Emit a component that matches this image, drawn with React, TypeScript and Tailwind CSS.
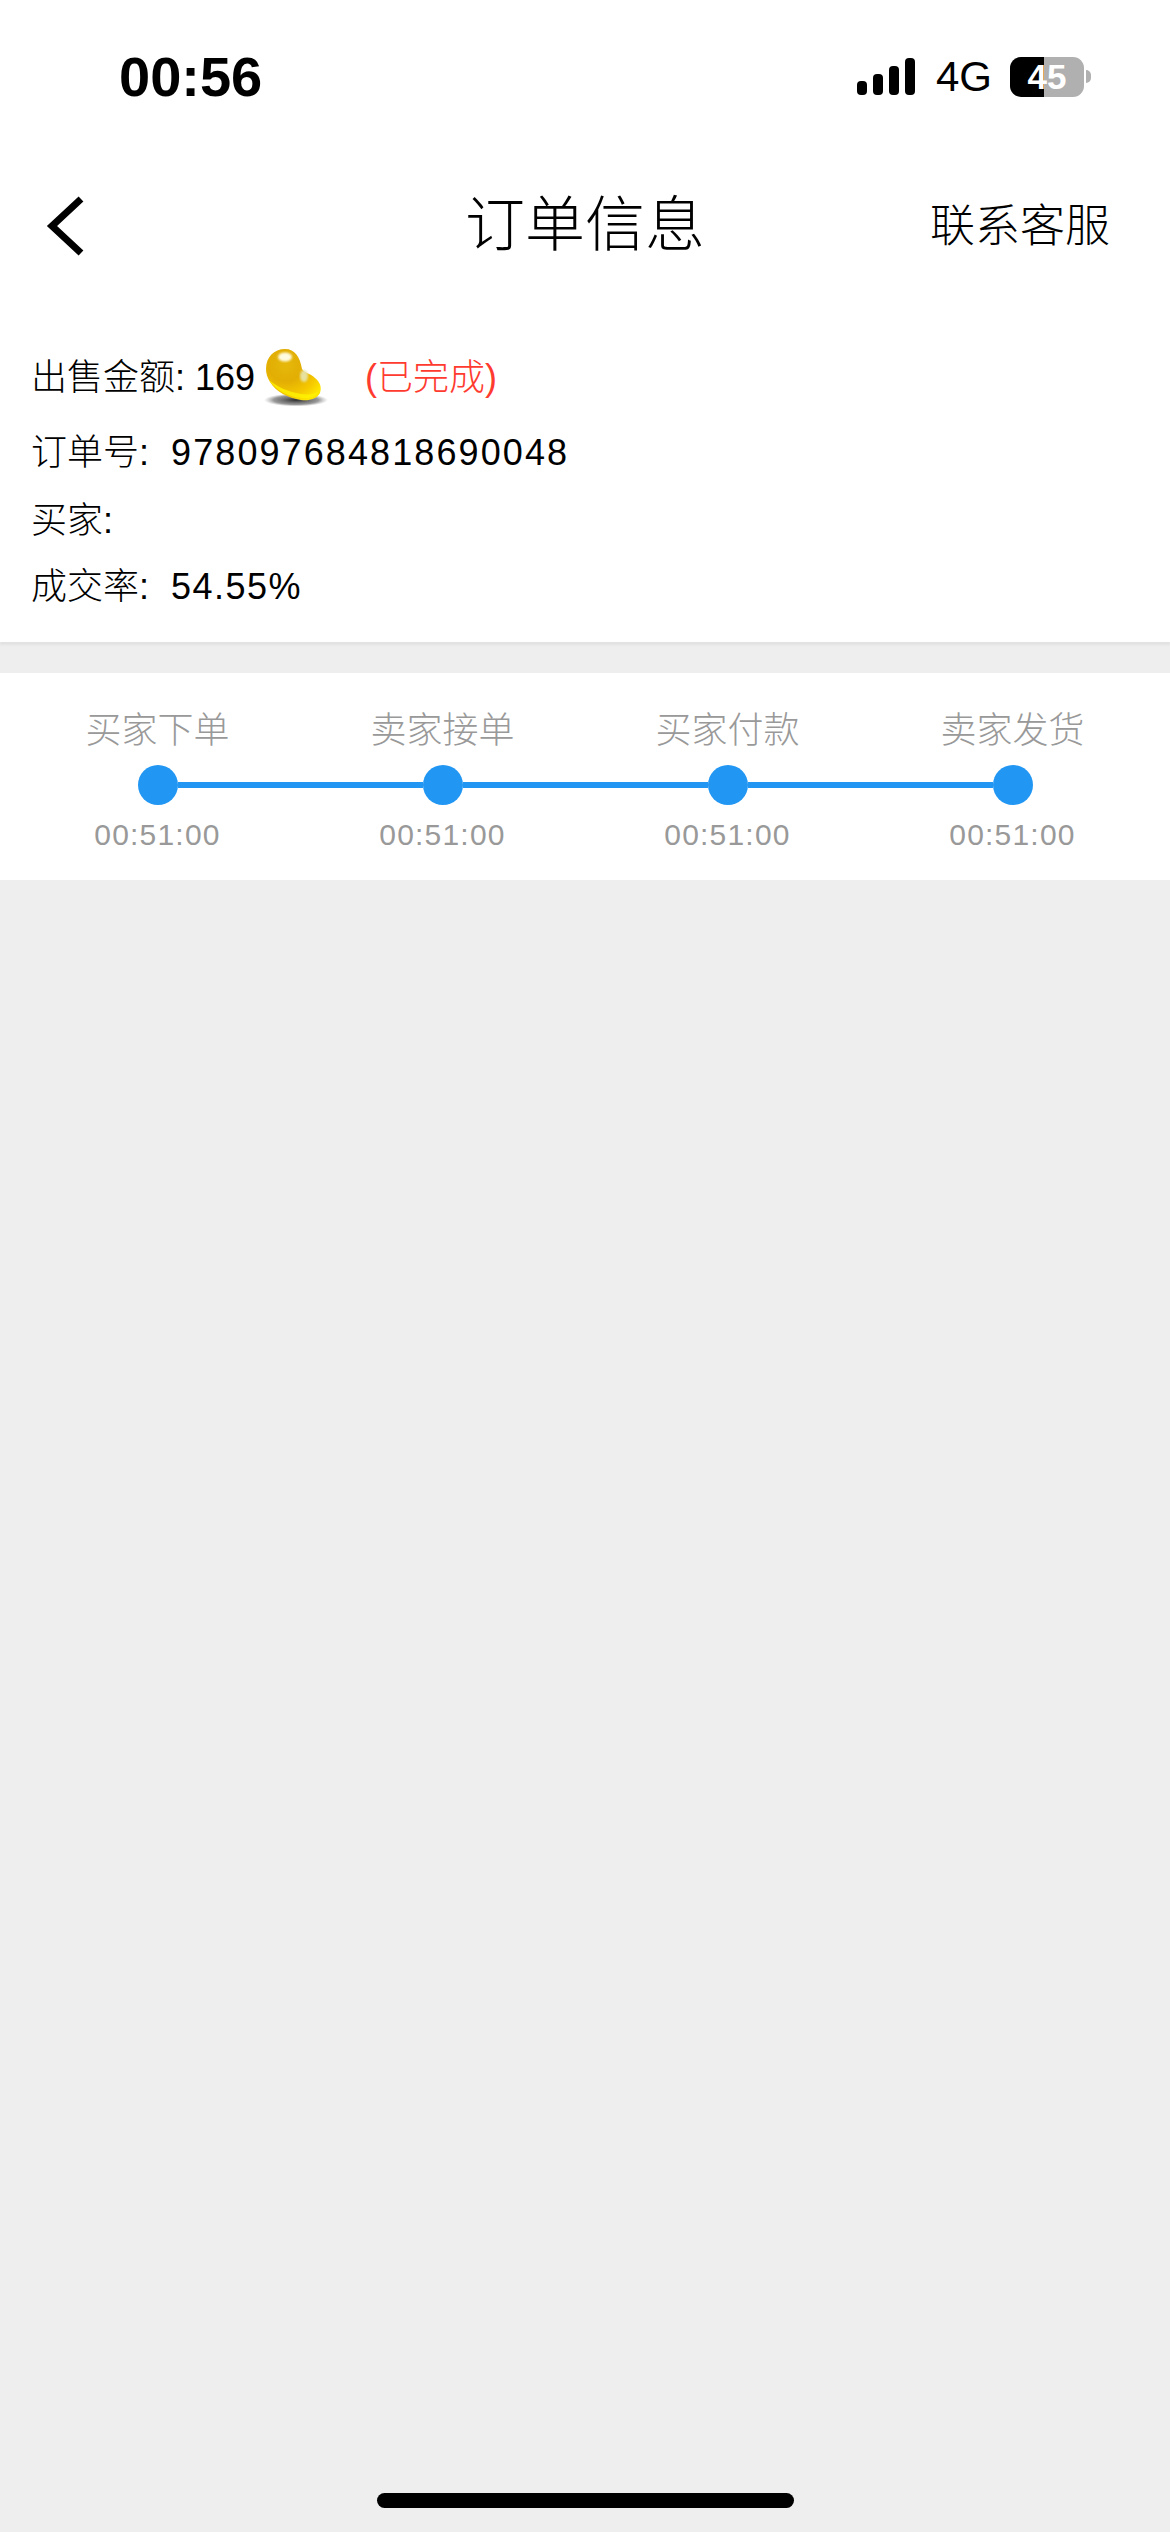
const FONT = "font-['Liberation_Sans','Noto_Sans_CJK_SC',sans-serif]";

const STEPS = [
  { label: "买家下单", time: "00:51:00" },
  { label: "卖家接单", time: "00:51:00" },
  { label: "买家付款", time: "00:51:00" },
  { label: "卖家发货", time: "00:51:00" },
];

function SignalBars() {
  return (
    <svg width="58" height="37" viewBox="0 0 58 37" fill="#000">
      <rect x="0" y="23" width="10" height="14" rx="4" />
      <rect x="16" y="16" width="10" height="21" rx="4" />
      <rect x="32" y="8" width="10" height="29" rx="4" />
      <rect x="48" y="0" width="10" height="37" rx="4" />
    </svg>
  );
}

function Battery() {
  return (
    <div className="flex items-center">
      <div className="relative flex h-[40px] w-[74px] overflow-hidden rounded-[11px]">
        <div className="w-[34px] bg-black" />
        <div className="flex-1 bg-[#b0b0b0]" />
        <span className="absolute inset-0 flex items-center justify-center text-[35px] font-bold leading-none text-white">
          45
        </span>
      </div>
      <div className="ml-[2px] h-[13px] w-[5px] rounded-r-full bg-[#b0b0b0]" />
    </div>
  );
}

function Bean() {
  return (
    <svg width="64" height="58" viewBox="0 0 64 58">
      <defs>
        <radialGradient id="beanFill" cx="0.36" cy="0.32" r="0.78">
          <stop offset="0" stopColor="#e6b80a" />
          <stop offset="0.4" stopColor="#e2ae04" />
          <stop offset="0.75" stopColor="#f5c800" />
          <stop offset="1" stopColor="#ffe600" />
        </radialGradient>
        <radialGradient id="beanShadow" cx="0.5" cy="0.5" r="0.5">
          <stop offset="0" stopColor="#222" stopOpacity="0.95" />
          <stop offset="0.7" stopColor="#555" stopOpacity="0.6" />
          <stop offset="1" stopColor="#888" stopOpacity="0" />
        </radialGradient>
        <filter id="beanBlur">
          <feGaussianBlur stdDeviation="1.2" />
        </filter>
      </defs>
      <ellipse cx="32" cy="51" rx="32" ry="6.5" fill="url(#beanShadow)" />
      <path
        d="M2 20C2 8 10 0 21 0C31 0 36 8 38 20C40 24 46 24 51 29C56 33 58 38 56 44C53 50 45 52 37 51C24 49 12 43 6 33C3 28 2 24 2 20Z"
        fill="url(#beanFill)"
      />
      <path
        d="M5 31C12 42 25 48 38 49C46 50 53 47 55 42C52 45 45 46 37 45C25 43 13 38 5 31Z"
        fill="#fff200"
        opacity="0.8"
      />
      <ellipse cx="21" cy="8" rx="7" ry="4.5" fill="#fffbe0" filter="url(#beanBlur)" />
      <ellipse cx="40" cy="27" rx="4" ry="6" fill="#e7e6b0" opacity="0.9" filter="url(#beanBlur)" />
    </svg>
  );
}

export default function App() {
  return (
    <div className={`flex min-h-[2532px] flex-col bg-[#eeeeee] ${FONT} text-black`}>
      <div className="bg-white">
        <div className="flex h-[156px] items-center justify-between pb-[3px] pl-[119px] pr-[79px]">
          <span className="text-[56px] font-bold leading-none">00:56</span>
          <div className="flex items-center">
            <SignalBars />
            <span className="ml-[21px] mr-[18px] text-[42px] leading-none">4G</span>
            <Battery />
          </div>
        </div>

        <div className="relative flex h-[142px] items-center justify-between pb-[2px] pl-[46px] pr-[60px]">
          <svg width="40" height="60" viewBox="0 0 40 60" fill="none">
            <path d="M35 3L6 30L35 57" stroke="#000" strokeWidth="7" />
          </svg>
          <span className="absolute inset-x-0 text-center text-[60px] font-light leading-none">订单信息</span>
          <span className="text-[45px] font-light leading-none">联系客服</span>
        </div>

        <div className="flex flex-col px-[31px] pb-[32px] pt-[49px] text-[36px] font-light shadow-[0_3px_2px_#e2e2e2]">
          <div className="flex h-[62px] items-center">
            <span>出售金额: 169</span>
            <span className="ml-[9px]">
              <Bean />
            </span>
            <span className="ml-[37px] text-[#ff3b30]">(已完成)</span>
          </div>
          <div className="mt-[21px] flex h-[46px] items-center">
            <span>订单号:</span>
            <span className="ml-[22px] tracking-[2.1px]">978097684818690048</span>
          </div>
          <div className="mt-[22px] flex h-[46px] items-center">买家:</div>
          <div className="mt-[20px] flex h-[46px] items-center">
            <span>成交率:</span>
            <span className="ml-[22px] tracking-[1.5px]">54.55%</span>
          </div>
        </div>
      </div>

      <div className="mt-[31px] grid h-[207px] grid-cols-4 bg-white px-[15px] pt-[35px]">
        {STEPS.map((step, i) => (
          <div key={step.label} className="flex flex-col items-center">
            <span className="h-[46px] text-[36px] font-light leading-[46px] text-[#999]">{step.label}</span>
            <div className="mt-[11px] flex h-[40px] w-full items-center">
              <div className={`h-[6px] flex-1 ${i === 0 ? "" : "bg-[#2196f3]"}`} />
              <div className="h-[40px] w-[40px] rounded-full bg-[#2196f3]" />
              <div className={`h-[6px] flex-1 ${i === STEPS.length - 1 ? "" : "bg-[#2196f3]"}`} />
            </div>
            <span className="mt-[11px] text-[30px] font-light leading-[38px] tracking-[1.2px] text-[#999]">{step.time}</span>
          </div>
        ))}
      </div>

      <div className="mt-auto flex justify-center pb-[24px]">
        <div className="h-[15px] w-[417px] rounded-[8px] bg-black" />
      </div>
    </div>
  );
}
